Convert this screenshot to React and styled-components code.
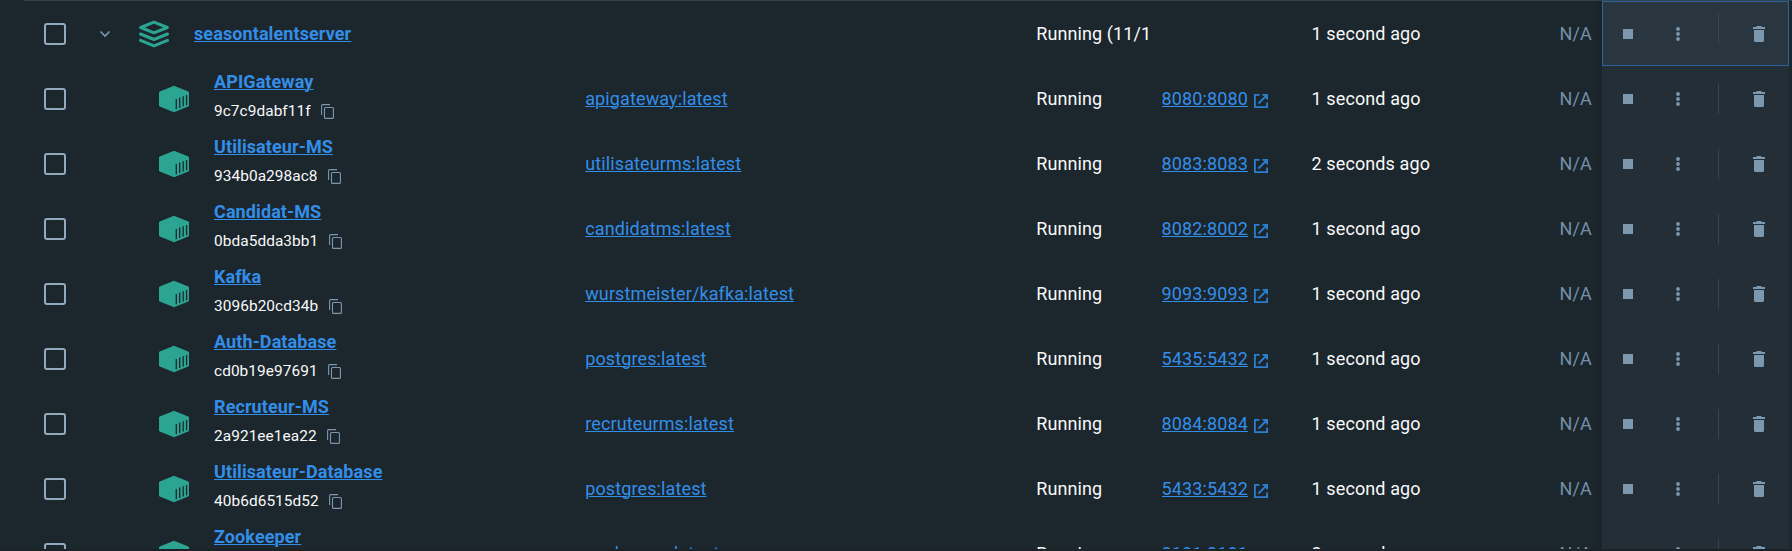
import React from "react";
import styled, { createGlobalStyle } from "styled-components";

const GlobalStyle = createGlobalStyle`
  * { box-sizing: border-box; }
  body {
    margin: 0;
    background: #1c262d;
    font-family: Roboto, "Liberation Sans", sans-serif;
    overflow: hidden;
  }
`;

const Panel = styled.main`
  height: 551px;
  overflow: hidden;
  background: #1c262d;
  display: flex;
  flex-direction: column;
`;

const TopRule = styled.div`
  flex: none;
  height: 1px;
  margin-left: 24px;
  background: #33424d;
`;

const List = styled.div`
  height: 548px;
  overflow: hidden;
`;

const BottomEdge = styled.div`
  flex: none;
  height: 2px;
  background: #1a2228;
`;

const Row = styled.div`
  display: grid;
  grid-template-columns: 99px 486.2px 451px 125.4px 150px 222.4px 60px 8px 187px;
  height: 65px;
  font-size: 18px;
  line-height: 24px;
  letter-spacing: 0.12px;
  color: #f8f9fa;
`;

const Cell = styled.div`
  display: flex;
  align-items: center;
  min-width: 0;
  white-space: nowrap;
  overflow: hidden;
`;

const TextCell = styled(Cell)`
  font-weight: 450;
  letter-spacing: 0.1px;
`;

const CheckCell = styled(Cell)`
  padding: 1px 0 0 44px;
`;

const Checkbox = styled.span`
  width: 22px;
  height: 22px;
  border: 2px solid #93aabe;
  border-radius: 3px;
`;

const NameCell = styled(Cell)`
  padding-left: ${(p) => (p.$nested ? 60 : 0)}px;
`;

const Chevron = styled.svg`
  flex: none;
  width: 12px;
  height: 8px;
  margin-top: 1px;
  margin-right: 28px;
`;

const KindIcon = styled.svg`
  flex: none;
  width: 30px;
  height: 28px;
  margin-top: 1px;
  margin-right: 25px;
`;

const Link = styled.a`
  color: #338ee8;
  font-weight: ${(p) => (p.$strong ? 700 : 400)};
  letter-spacing: ${(p) => (p.$strong ? 0.1 : 0.12)}px;
  text-decoration: underline;
  text-decoration-thickness: 1px;
  text-underline-offset: 1px;
`;

const NameStack = styled.div`
  display: flex;
  flex-direction: column;
  gap: 5px;
  padding-bottom: 4px;
`;

const IdLine = styled.div`
  display: flex;
  align-items: center;
  gap: 10.4px;
  font-size: 15.43px;
  font-weight: 450;
  letter-spacing: 0.06px;
`;

const CopyIcon = styled.svg`
  width: 13px;
  height: 15px;
  margin-top: 1px;
`;

const Status = styled(TextCell)`
  width: 114px;
`;

const OpenIcon = styled.svg`
  width: 14px;
  height: 14px;
  margin: 4px 0 0 6px;
`;

const Usage = styled(Cell)`
  justify-content: flex-end;
  padding-right: 2px;
  color: #7390a8;
`;

const Shade = styled.div`
  background: linear-gradient(to right, #1c262d, #1a232a);
`;

const Actions = styled.div`
  display: grid;
  grid-template-columns: 52px 43px 35px 1fr;
  align-items: center;
  padding-left: 21px;
  background: ${(p) => (p.$active ? "#293640" : "#232e37")};
  box-shadow: ${(p) => (p.$active ? "inset 0 0 0 1px #2a649f" : "none")};
`;

const StopIcon = styled.span`
  width: 10px;
  height: 10px;
  margin-top: 1px;
  background: #7c98ae;
`;

const MoreIcon = styled.svg`
  width: 6px;
  height: 16px;
  margin-top: 1px;
`;

const Divider = styled.span`
  width: 1px;
  height: 30px;
  margin-top: ${(p) => (p.$raised ? -9 : 1)}px;
  background: #3a464f;
`;

const TrashIcon = styled.svg`
  width: 12px;
  height: 16px;
  margin-top: 1px;
`;

const containers = [
  ["APIGateway", "9c7c9dabf11f", "apigateway:latest", "8080:8080", "1 second ago"],
  ["Utilisateur-MS", "934b0a298ac8", "utilisateurms:latest", "8083:8083", "2 seconds ago"],
  ["Candidat-MS", "0bda5dda3bb1", "candidatms:latest", "8082:8002", "1 second ago"],
  ["Kafka", "3096b20cd34b", "wurstmeister/kafka:latest", "9093:9093", "1 second ago"],
  ["Auth-Database", "cd0b19e97691", "postgres:latest", "5435:5432", "1 second ago"],
  ["Recruteur-MS", "2a921ee1ea22", "recruteurms:latest", "8084:8084", "1 second ago"],
  ["Utilisateur-Database", "40b6d6515d52", "postgres:latest", "5433:5432", "1 second ago"],
  ["Zookeeper", "", "zookeeper:latest", "2181:2181", "2 seconds ago"],
];

function StackGlyph() {
  return (
    <KindIcon viewBox="0 0 30 28" fill="none" stroke="#2ba592" strokeWidth="3" strokeLinejoin="round" strokeLinecap="round">
      <path d="M15 2.2 28.3 7.5 15 12.8 1.7 7.5z" />
      <path d="M1.5 14 15 19.5 28.5 14" />
      <path d="M1.5 20.4 15 25.9l13.5-5.5" />
    </KindIcon>
  );
}

function ContainerGlyph() {
  return (
    <KindIcon viewBox="0 0 30 28">
      <path
        d="M14.4.9q.6-.2 1.2 0L29.3 6.5q.7.3.7 1v13q0 .7-.7 1L15.6 27.1q-.6.2-1.2 0L.7 21.5q-.7-.3-.7-1v-13q0-.7.7-1z"
        fill="#2ba592"
      />
      <path d="M17.3 13.9v10.3M20.7 12.6v10.3M24.2 11.3v10.2M27.6 10v10.2" stroke="#1c262d" strokeWidth="1.3" />
    </KindIcon>
  );
}

function ActionButtons({ active }) {
  return (
    <Actions $active={active}>
      <StopIcon />
      <MoreIcon viewBox="0 0 6 16" fill="#7c98ae">
        <circle cx="3" cy="3" r="1.9" />
        <circle cx="3" cy="8" r="1.9" />
        <circle cx="3" cy="13" r="1.9" />
      </MoreIcon>
      <Divider $raised={active} />
      <TrashIcon viewBox="0 0 12 16" fill="#7c98ae">
        <path d="M0 1h3l1-1h4l1 1h3v2H0z" />
        <path d="M1 4h10v10.500q0 1.500-1.500 1.500h-7Q1 16 1 14.500z" />
      </TrashIcon>
    </Actions>
  );
}

function GroupRow() {
  return (
    <Row>
      <CheckCell><Checkbox /></CheckCell>
      <NameCell>
        <Chevron viewBox="0 0 12 8" fill="none" stroke="#7c98ae" strokeWidth="1.6">
          <path d="M1.5 1.5 6 6l4.5-4.5" />
        </Chevron>
        <StackGlyph />
        <Link $strong>seasontalentserver</Link>
      </NameCell>
      <Cell />
      <Status>Running (11/11)</Status>
      <Cell />
      <TextCell>1 second ago</TextCell>
      <Usage>N/A</Usage>
      <Shade />
      <ActionButtons active />
    </Row>
  );
}

function ContainerRow({ data }) {
  const [name, id, image, port, started] = data;
  return (
    <Row>
      <CheckCell><Checkbox /></CheckCell>
      <NameCell $nested>
        <ContainerGlyph />
        <NameStack>
          <Link $strong>{name}</Link>
          <IdLine>
            {id || "\u00a0"}
            <CopyIcon viewBox="0 0 13 15" fill="none" stroke="#7c98ae" strokeWidth="1.1">
              <path d="M.6 11V1.6q0-1 1-1H9" />
              <rect x="3.5" y="3.5" width="8.9" height="10.9" rx="1" />
            </CopyIcon>
          </IdLine>
        </NameStack>
      </NameCell>
      <Cell><Link>{image}</Link></Cell>
      <Status>Running</Status>
      <Cell>
        <Link>{port}</Link>
        <OpenIcon viewBox="0 0 14 14" fill="none" stroke="#2c7fd0" strokeWidth="1.8">
          <path d="M5.500.9H.9v12.200h12.200V8.500M8.500.9h4.600v4.600M13 1 4.500 9.500" />
        </OpenIcon>
      </Cell>
      <TextCell>{started}</TextCell>
      <Usage>N/A</Usage>
      <Shade />
      <ActionButtons />
    </Row>
  );
}

export default function App() {
  return (
    <>
      <GlobalStyle />
      <Panel>
        <TopRule />
        <List>
          <GroupRow />
          {containers.map((c) => <ContainerRow key={c[0]} data={c} />)}
        </List>
        <BottomEdge />
      </Panel>
    </>
  );
}
